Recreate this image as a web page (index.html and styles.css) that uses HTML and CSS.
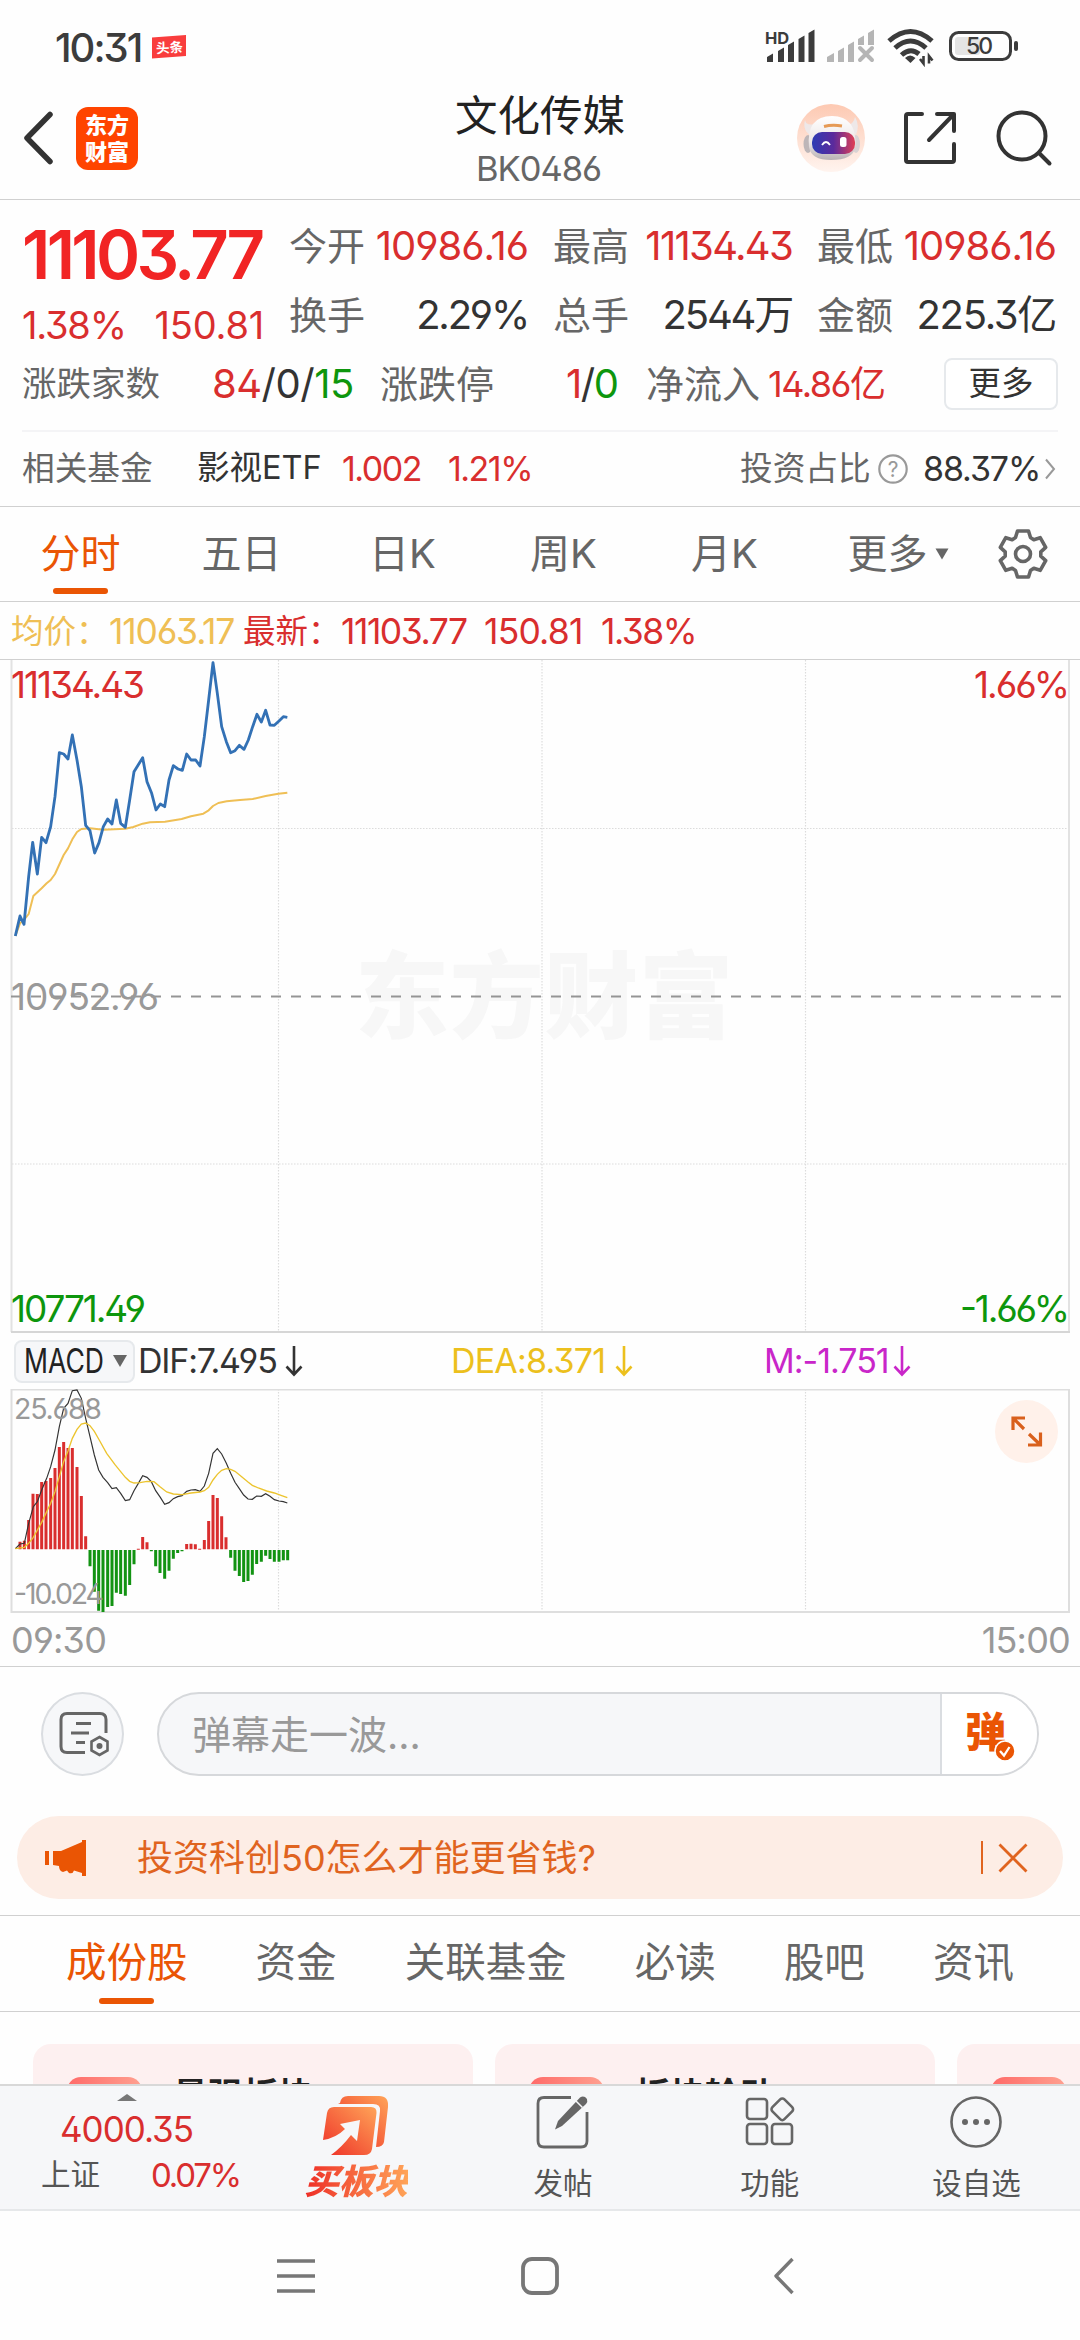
FILE: index.html
```html
<!DOCTYPE html>
<html lang="zh-CN">
<head>
<meta charset="utf-8">
<title>文化传媒 BK0486</title>
<link rel="stylesheet" href="styles.css">
</head>
<body>
<div class="phone">
  <div class="status">
    <span class="clock">10:31</span>
    <svg class="toutiao" width="34" height="34" viewBox="0 0 34 34"><path d="M0 7.500L34 5V26L0 28.500z" fill="#f93d3d"/><text x="4" y="22.500" font-size="13.500" font-weight="700" fill="#fff" transform="rotate(-3 17 17)">头条</text></svg>
    <svg class="signals" width="260" height="40" viewBox="0 0 260 40">
      <text class="hd" x="0" y="16.500">HD</text>
      <g fill="#3c3c3c">
        <path d="M2 30l6-3.500v8.500h-6zM13 24l6-3.500v14.500h-6zM23 18l6-3.500v20.500h-6zM33.500 12l6-3.500v26.500h-6zM43.500 6l6-3.500v32.500h-6z"/>
      </g>
      <g fill="#b5b5b5">
        <path d="M62 30l7-4v9h-7zM73 24l6-3.500v14.500h-6zM83 18l6-3.500v20.500h-6zM93 12l6-3.500v9.500h-6zM103 6l6-3.500v15.500h-6z"/>
      </g>
      <path d="M95 21l12 12M107 21l-12 12" stroke="#b5b5b5" stroke-width="4" stroke-linecap="round"/>
      <g fill="none" stroke="#3c3c3c" stroke-width="5">
        <path d="M124 14Q145.500-5 167 14"/><path d="M130 21Q145.500 7 161 21"/><path d="M136.500 28Q145.500 20 154 27"/>
      </g>
      <path d="M140 31Q145 26 150.500 31L145.500 36z" fill="#3c3c3c"/>
      <path d="M158.500 29v7.500l-3.500-4.500M164 36.500v-7.500l3.500 4.500" fill="none" stroke="#3c3c3c" stroke-width="2.600"/>
      <rect x="190" y="10" width="25" height="18" rx="3" fill="#e4e4e4"/>
      <rect x="185.500" y="5.500" width="60" height="27" rx="8" fill="none" stroke="#3c3c3c" stroke-width="3"/>
      <rect x="249" y="14" width="4" height="10" rx="2" fill="#3c3c3c"/>
      <text class="num" x="201" y="27" font-size="23" font-weight="500" fill="#3c3c3c" textLength="27">50</text>
    </svg>
  </div>

  <header class="header">
    <svg class="back" width="40" height="60" viewBox="0 0 40 60"><path d="M31 6.500L8 30L31 53.500" fill="none" stroke="#333" stroke-width="5.500" stroke-linecap="round" stroke-linejoin="round"/></svg>
    <div class="logo"><span>东方</span><span>财富</span></div>
    <div class="title"><h1>文化传媒</h1><p>BK0486</p></div>
    <svg class="robot" width="70" height="70" viewBox="0 0 70 70">
      <defs>
        <linearGradient id="halo" x1="0" y1="0" x2="0" y2="1"><stop offset="0" stop-color="#fdc9b2"/><stop offset="1" stop-color="#fff4ef"/></linearGradient>
        <linearGradient id="head" x1="0" y1="0" x2="0" y2="1"><stop offset="0" stop-color="#fff"/><stop offset=".6" stop-color="#ece6e6"/><stop offset="1" stop-color="#b9b2b4"/></linearGradient>
        <linearGradient id="visor"><stop offset="0" stop-color="#2c3bb4"/><stop offset=".5" stop-color="#5b2a9c"/><stop offset="1" stop-color="#e04055"/></linearGradient>
      </defs>
      <circle cx="35" cy="35" r="34" fill="url(#halo)"/>
      <ellipse cx="12" cy="41" rx="4.500" ry="9" fill="#bdb6b8"/><ellipse cx="60" cy="41" rx="4" ry="9" fill="#d9d3d4"/>
      <path d="M9 17q1 6 10 4l-3 12q-10-5-7-16zM59 14q5 8 1 18l-10-9q8-2 9-9z" fill="#eee8e8"/>
      <path d="M13 44Q10 13 36 13Q61 13 59.500 44Q57 57 35 57Q15 57 13 44z" fill="url(#head)"/>
      <path d="M28 23.500q8-2 18-.5" stroke="#e69a55" stroke-width="3" fill="none"/>
      <rect x="16" y="29" width="43" height="22" rx="10" fill="url(#visor)"/>
      <path d="M26 42q4-6 8 0" stroke="#fff" stroke-width="1.800" fill="none"/><rect x="44" y="34" width="6.500" height="10" rx="2.500" fill="#fff"/>
    </svg>
    <svg class="share" width="56" height="56" viewBox="0 0 56 56" fill="none" stroke="#333" stroke-width="4" stroke-linecap="round" stroke-linejoin="round"><path d="M20 4H6q-2 0-2 2V50q0 2 2 2H50q2 0 2-2V34M35 4H52V21M51 5L27 30"/></svg>
    <svg class="search" width="58" height="58" viewBox="0 0 58 58" fill="none" stroke="#333" stroke-width="4" stroke-linecap="round"><circle cx="26" cy="26" r="23.500"/><path d="M43 43L53.500 53.500"/></svg>
  </header>

  <section class="quote">
    <div class="quote-top">
      <div class="price">
        <div class="last">11103.77</div>
        <div class="change"><span>1.38%</span><span class="diff">150.81</span></div>
      </div>
      <div class="stats">
        <div class="stat"><label>今开</label><b class="red">10986.16</b></div>
        <div class="stat"><label>最高</label><b class="red high">11134.43</b></div>
        <div class="stat"><label>最低</label><b class="red">10986.16</b></div>
        <div class="stat"><label>换手</label><b>2.29%</b></div>
        <div class="stat"><label>总手</label><b>2544万</b></div>
        <div class="stat"><label>金额</label><b class="amount">225.3亿</b></div>
      </div>
    </div>
    <div class="breadth">
      <label class="b-label">涨跌家数</label>
      <span class="b-count"><i class="red">84</i>/0/<i class="green">15</i></span>
      <label class="b-limit">涨跌停</label>
      <span class="b-limit-val"><i class="red">1</i>/<i class="green">0</i></span>
      <label class="b-flow">净流入</label>
      <span class="b-flow-val red">14.86亿</span>
      <button class="more">更多</button>
    </div>
    <div class="fund">
      <label>相关基金</label>
      <span class="f-name">影视ETF</span>
      <span class="f-price red">1.002</span>
      <span class="f-pct red">1.21%</span>
      <label class="f-ratio">投资占比</label>
      <svg class="help" width="32" height="32" viewBox="0 0 32 32"><circle cx="16" cy="16" r="13.700" fill="none" stroke="#999" stroke-width="2.200"/><text class="num" x="16" y="23.500" text-anchor="middle" font-size="21" fill="#999">?</text></svg>
      <span class="f-val">88.37%</span>
      <svg class="chev" width="12" height="22" viewBox="0 0 12 22"><path d="M2 1.500L10 11L2 20.500" fill="none" stroke="#999" stroke-width="2"/></svg>
    </div>
  </section>

  <nav class="periods">
    <a class="on">分时</a><a>五日</a><a>日K</a><a>周K</a><a>月K</a>
    <a class="menu">更多<svg width="14" height="12" viewBox="0 0 14 12"><path d="M.5.5h13L7 11.500z" fill="#666"/></svg></a>
    <svg class="gear" width="52" height="52" viewBox="-26 -26 52 52" fill="none" stroke="#666" stroke-width="3.600" stroke-linejoin="round"><path d="M-5.500-23L5.500-23L7.500-16.500L10.800-14.300L17.200-16.300L22.700-6.700L17.800-2.200L17.800 2.200L22.700 6.700L17.200 16.300L10.800 14.300L7.500 16.500L5.500 23L-5.500 23L-7.500 16.500L-10.800 14.300L-17.200 16.300L-22.700 6.700L-17.800 2.200L-17.800-2.200L-22.700-6.700L-17.200-16.300L-10.800-14.300L-7.500-16.500z"/><circle r="7.500"/></svg>
  </nav>

  <div class="ticker">
    <span class="t-avg">均价：</span><span class="t-avg-val">11063.17</span><span class="t-new">最新：</span><span class="t-new-val">11103.77</span><span class="t-chg">150.81</span><span>1.38%</span>
  </div>

  <svg class="chart" width="1080" height="673" viewBox="0 660 1080 673">
    <text class="watermark" x="355" y="1031" textLength="378">东方财富</text>
    <g stroke="#dcdcdc" stroke-width="1.200" stroke-dasharray="1.500 1.500"><path d="M278.500 660V1332M542 660V1332M805.500 660V1332M12 828.500H1069M12 1164H1069"/></g>
    <path d="M11.500 660V1332M1069 660V1332" stroke="#e2e2e2" stroke-width="2"/>
    <path d="M11 1332H1070" stroke="#d6d6d6" stroke-width="2"/>
    <path d="M11 996.500H1069" stroke="#959595" stroke-width="2" stroke-dasharray="10 10"/>
    <g transform="translate(0 640) scale(.33333)" fill="none" stroke-linejoin="round">
      <polyline stroke="#efbf55" stroke-width="6" points="46,888 60,850 72,840 86,822 100,768 125,745 140,730 152,720 165,702 191,645 204,625 217,598 231,576 244,567 270,565 310,569 376,566 400,561 428,551 450,547 495,545 545,537 573,529 610,521 626,511 639,498 655,489 680,484 720,480 758,477 797,468 835,461 862,458"/>
      <polyline stroke="#3371b5" stroke-width="8.500" points="46,888 60,828 72,853 86,710 98,607 112,702 125,592 138,608 152,560 165,470 178,338 191,342 204,357 217,285 231,360 244,440 257,556 270,572 284,639 297,608 310,560 323,537 336,552 349,480 362,550 376,562 389,480 402,395 415,374 428,353 441,425 455,460 468,510 481,492 494,500 507,420 520,377 534,387 547,391 560,342 573,360 587,360 600,378 613,290 626,180 639,68 652,160 665,260 679,305 692,338 705,332 718,316 732,328 745,300 758,260 771,223 784,246 797,211 810,255 823,256 837,243 850,230 862,232"/>
    </g>
    <g class="num" font-size="37">
      <text x="11" y="698" fill="#d92e2e" textLength="134">11134.43</text>
      <text x="974" y="698" fill="#d92e2e" textLength="96">1.66%</text>
      <text x="11" y="1010" fill="#999" textLength="148">10952.96</text>
      <text x="11" y="1322" fill="#0d960d" textLength="135">10771.49</text>
      <text x="960" y="1322" fill="#0d960d" textLength="110">-1.66%</text>
    </g>
  </svg>

  <div class="macd-head">
    <button class="indicator"><svg width="80" height="30" viewBox="0 0 80 30"><text class="num" x="0" y="27" font-size="34" fill="#222" textLength="80" lengthAdjust="spacingAndGlyphs">MACD</text></svg><svg width="14" height="12" viewBox="0 0 14 12"><path d="M0 0h14L7 12z" fill="#666"/></svg></button>
    <span class="dif">DIF:7.495</span><svg class="down" width="18" height="32" viewBox="0 0 18 32"><path d="M9 1V29M1.500 21.500L9 29.500L16.500 21.500"/></svg>
    <span class="dea">DEA:8.371</span><svg class="down y" width="18" height="32" viewBox="0 0 18 32"><path d="M9 1V29M1.500 21.500L9 29.500L16.500 21.500"/></svg>
    <span class="mval">M:-1.751</span><svg class="down m" width="18" height="32" viewBox="0 0 18 32"><path d="M9 1V29M1.500 21.500L9 29.500L16.500 21.500"/></svg>
  </div>

  <svg class="macd" width="1080" height="225" viewBox="0 1389 1080 225">
    <g stroke="#dcdcdc" stroke-width="1.200" stroke-dasharray="1.500 1.500"><path d="M278.500 1389V1612M542 1389V1612M805.500 1389V1612"/></g>
    <path d="M11 1389.500H1069.500M11.500 1389V1612H1069V1389" fill="none" stroke="#dedede" stroke-width="2"/>
    <g transform="translate(0 1290) scale(.33333)" fill="none">
      <path stroke="#d92e2e" stroke-width="9" d="M60 778V755M73 778V752M86 778V690M99 778V611M112 778V612M125 778V576M138 778V573M152 778V564M165 778V534M178 778V471M191 778V456M204 778V474M217 778V474M231 778V531M244 778V618M257 778V739M415 779V776M428 778V741M441 778V757M560 778V762M573 778V761M586 778V763M599 779V776M613 778V750M626 778V693M639 778V615M652 778V624M665 778V679M678 778V742"/>
      <path stroke="#129312" stroke-width="9" d="M270 780V829M283 780V905M296 780V962M309 780V966M323 780V951M336 780V948M349 780V908M362 780V912M376 780V917M389 780V885M402 780V823M454 780V784M467 780V829M480 780V849M494 780V866M507 780V842M520 780V806M533 780V789M546 780V784M692 780V803M705 780V842M718 780V858M731 780V876M744 780V873M757 780V854M770 780V822M784 780V815M797 780V797M810 780V807M823 780V815M837 780V815M850 780V811M863 780V811"/>
      <polyline stroke="#333" stroke-width="3.500" points="46,776 60,762 73,760 86,700 100,650 112,635 125,600 140,565 152,530 165,480 178,410 191,355 204,340 217,302 231,300 244,325 257,385 270,440 283,495 296,540 309,562 323,578 336,596 349,593 362,610 376,632 389,629 402,602 415,580 428,557 441,562 454,575 467,602 481,622 494,643 507,638 520,626 533,620 546,617 560,604 573,600 586,599 600,604 613,588 626,550 639,490 652,476 665,492 679,520 692,550 705,577 718,596 731,615 744,627 757,628 770,618 784,619 797,611 810,619 823,629 837,633 850,635 862,639"/>
      <polyline stroke="#ecc42e" stroke-width="4" points="46,776 73,772 86,760 100,742 125,697 152,640 165,605 178,560 191,515 204,483 217,445 231,418 244,402 257,399 270,407 283,424 296,447 320,490 345,524 376,562 389,574 402,579 420,578 441,574 462,575 481,591 500,606 520,612 546,614 573,609 600,606 613,602 626,592 639,570 652,553 665,541 679,536 692,538 705,544 725,560 744,576 757,586 775,594 800,603 823,609 845,617 862,623"/>
    </g>
    <g class="num" font-size="28.500" fill="#999">
      <text x="14" y="1419" textLength="88">25.688</text>
      <text x="14" y="1604" textLength="90">-10.024</text>
    </g>
    <circle cx="1026.500" cy="1431.500" r="31.500" fill="#fff1ea"/>
    <path d="M1025 1418H1013V1430M1013.500 1418.500L1024 1429M1028 1445H1040.500V1432.500M1040 1444.500L1029 1434" fill="none" stroke="#d9601c" stroke-width="3.200"/>
  </svg>

  <div class="times"><span>09:30</span><span>15:00</span></div>

  <div class="danmaku">
    <div class="round"><svg width="52" height="46" viewBox="0 0 52 46" fill="none" stroke="#666" stroke-width="3"><path d="M28 41.500H10q-6 0-6-6V8.500q0-6 6-6H43q6 0 6 6V22M19 12.500H34M14 22H32M19 31.500H28"/><path stroke-width="2.600" d="M42.500 27.500L50.500 32V41L42.500 45.500L34.500 41V32z" transform="translate(0 -1.500)"/><circle cx="42.500" cy="35" r="3" fill="#666" stroke="none"/></svg></div>
    <div class="input"><span>弹幕走一波...</span>
      <div class="dan"><em>弹</em><svg width="22" height="22" viewBox="0 0 22 22"><circle cx="11" cy="11" r="10" fill="#ea5504" stroke="#fff" stroke-width="1.500"/><path d="M6 11l4 4.500L15.500 7" fill="none" stroke="#fff" stroke-width="2.300"/></svg></div>
    </div>
  </div>

  <div class="notice">
    <svg width="42" height="38" viewBox="0 0 42 38" fill="#ea5504"><path d="M0 12h4v14H0zM8 12H16L37 3V1h4V37h-4V34L29 31.500Q28 35 24 34L22 31.500L18 33Q14 32 14 27L8 26z"/></svg>
    <span>投资科创50怎么才能更省钱?</span>
    <i></i>
    <svg class="close" width="30" height="30" viewBox="0 0 30 30"><path d="M1.500 1.500L28.500 28.500M28.500 1.500L1.500 28.500" stroke="#e0641f" stroke-width="2.800"/></svg>
  </div>

  <nav class="sections">
    <a class="on">成份股</a><a>资金</a><a>关联基金</a><a>必读</a><a>股吧</a><a>资讯</a>
  </nav>

  <div class="cards">
    <div class="card"><i></i><b>最强板块</b></div>
    <div class="card"><i></i><b>板块轮动</b></div>
    <div class="card"><i></i></div>
  </div>

  <nav class="bottom">
    <div class="index">
      <svg width="20" height="7" viewBox="0 0 20 7"><path d="M0 7L10 0L20 7z" fill="#777"/></svg>
      <div class="i-val">4000.35</div>
      <div class="i-row"><span>上证</span><span class="red">0.07%</span></div>
    </div>
    <div class="item">
      <svg width="70" height="62" viewBox="0 0 70 62">
        <defs><linearGradient id="buy" x1="0" y1="1" x2="1" y2="0"><stop offset="0" stop-color="#ee2f27"/><stop offset="1" stop-color="#ffa458"/></linearGradient></defs>
        <path d="M19 8Q20 1 27 1H58Q68 1 67 12L63 47Q62 52 55 52L59 16Q60 9 52 9H17z" fill="url(#buy)"/>
        <path d="M13 12H50Q56 12 55.500 18L51 54Q50 60 43 60H10Q21 52 30 40L36 46L39 25L19 29L24 34Q15 43 2 45L6 18Q7 12 13 12z" fill="url(#buy)"/>
      </svg>
      <strong>买板块</strong>
    </div>
    <div class="item">
      <svg width="54" height="54" viewBox="0 0 54 54" fill="none" stroke="#666" stroke-width="2.800"><path d="M35 2.500H8q-6 0-6 6V46q0 6 6 6H45q6 0 6-6V17"/><path d="M19 34.500L22 26L44 2.500Q48 0 51 4Q52 7 50 9L26 31z" fill="#666" stroke="none"/><path d="M40 6l6.500 6.500" stroke="#f6f7f9" stroke-width="1.500"/></svg>
      <span>发帖</span>
    </div>
    <div class="item">
      <svg width="54" height="54" viewBox="0 0 54 54" fill="none" stroke="#666" stroke-width="2.600"><rect x="4" y="4" width="20" height="20" rx="3"/><rect x="4" y="29" width="20" height="20" rx="3"/><rect x="29" y="29" width="20" height="20" rx="3"/><rect x="30.800" y="5.800" width="17" height="17" rx="3" transform="rotate(45 39.300 14.300)"/></svg>
      <span>功能</span>
    </div>
    <div class="item">
      <svg width="54" height="54" viewBox="0 0 54 54"><circle cx="27" cy="27" r="24.500" fill="none" stroke="#666" stroke-width="2.600"/><g fill="#666"><circle cx="16" cy="27" r="3"/><circle cx="27" cy="27" r="3"/><circle cx="38" cy="27" r="3"/></g></svg>
      <span>设自选</span>
    </div>
  </nav>

  <div class="sysnav">
    <svg width="40" height="40" viewBox="0 0 40 40"><path d="M1 5H39M1 20H39M1 35H39" stroke="#777" stroke-width="3.500"/></svg>
    <svg width="40" height="40" viewBox="0 0 40 40"><rect x="3" y="3" width="34" height="34" rx="9" fill="none" stroke="#777" stroke-width="3.800"/></svg>
    <svg width="40" height="40" viewBox="0 0 40 40"><path d="M28.500 3L12 20L28.500 37" fill="none" stroke="#777" stroke-width="3.400" stroke-linejoin="round"/></svg>
  </div>
</div>
</body>
</html>
```
FILE: styles.css
```css
* { box-sizing: border-box; margin: 0; padding: 0; }
body { width: 1080px; height: 2340px; overflow: hidden; background: #fefefe; }
.phone {
  width: 1080px; height: 2340px; display: flex; flex-direction: column;
  font-family: Inter, "Noto Sans CJK SC", sans-serif;
  font-feature-settings: "cv09", "cv03", "cv04", "ss01";
  font-size: 38px; color: #333; line-height: 1; white-space: nowrap;
}
.phone > * { flex: none; }
svg { display: block; flex: none; }
i, em { font-style: normal; }
b, h1 { font-weight: 400; }
.num { font-family: Inter, sans-serif; }
.red { color: #d92e2e; }
.green { color: #0d960d; }
label { color: #666; }
button { font: inherit; color: #333; background: #fff; border: 2px solid #e6e9ec; }

.status { height: 96px; display: flex; align-items: flex-start; padding-left: 55px; }
.clock { width: 97px; margin-top: 26px; font-size: 40px; font-weight: 500; letter-spacing: -2px; color: #3c3c3c; line-height: 44px; }
.toutiao { margin-top: 30px; }
.signals { margin: 27px 0 0 579px; }
.hd { font: 700 16.500px Inter, sans-serif; fill: #3c3c3c; }

.header { height: 104px; border-bottom: 1px solid #d0d0d0; display: flex; align-items: flex-start; padding-left: 19px; }
.back { margin-top: 12px; }
.logo { width: 62px; height: 63px; margin: 11px 0 0 17px; border-radius: 12px; background: #ff4400; color: #fff; font-size: 22px; font-weight: 900; display: flex; flex-direction: column; align-items: center; justify-content: center; gap: 5px; }
.title { width: 404px; margin-left: 200px; text-align: center; }
.title h1 { font-size: 42.500px; color: #222; line-height: 42px; margin-top: -1px; }
.title p { font-size: 34.500px; color: #666; letter-spacing: -1px; line-height: 40px; margin: 12px 3px 0 0; }
.robot { margin: 7px 0 0 54px; }
.share { margin: 14px 0 0 36px; }
.search { margin: 14px 0 0 38px; }

.quote { height: 307px; border-bottom: 1px solid #d0d0d0; padding: 11px 22px 0; }
.quote-top { display: flex; gap: 25px; height: 138px; }
.price { width: 242px; color: #d92e2e; }
.last { font-size: 67px; font-weight: 600; color: #f12424; letter-spacing: -3.700px; line-height: 68px; margin-top: 10px; height: 69px; }
.change { display: flex; justify-content: space-between; letter-spacing: -1.200px; line-height: 70px; }
.diff { letter-spacing: -.2px; }
.stats { display: grid; grid-template-columns: repeat(3, 239px); column-gap: 25px; grid-auto-rows: 69px; }
.stat { display: flex; justify-content: space-between; align-items: center; }
.stat b { font-size: 40px; letter-spacing: -2.200px; }
.stat .red { letter-spacing: -1px; }
.stat .high { letter-spacing: -1.700px; }
.stat .amount { letter-spacing: -1.300px; }
.breadth { height: 70px; display: flex; align-items: center; }
.breadth span { font-size: 40px; letter-spacing: -1.500px; }
.b-label { font-size: 34.500px; width: 190px; }
.breadth .b-count { width: 168px; letter-spacing: -.5px; }
.b-limit { width: 186px; }
.b-limit-val { width: 80px; }
.b-flow { width: 122px; }
.breadth .b-flow-val { width: 176px; font-size: 36px; }
.more { width: 114px; height: 52px; border-radius: 8px; font-size: 32.500px; }
.fund { height: 75px; margin-top: 11px; border-top: 2px solid #f4f4f6; display: flex; align-items: center; font-size: 32.700px; }
.fund label:first-child { width: 175px; }
.fund span { font-size: 34px; letter-spacing: -1.500px; }
.fund .f-name { width: 145px; font-size: 32.500px; letter-spacing: 0; }
.f-price { width: 106px; }
.f-pct { width: 292px; }
.f-ratio { width: 137px; }
.help { margin-right: 14px; }
.fund .f-val { width: 121px; letter-spacing: -1.100px; }

.periods { height: 95px; border-bottom: 1px solid #d0d0d0; display: flex; align-items: stretch; font-size: 40px; color: #666; }
.periods a { width: 161px; display: flex; align-items: center; justify-content: center; position: relative; }
.periods .menu { width: 188px; gap: 7px; padding-right: 2px; }
.gear { margin: 21px 0 0 4px; }
.on { color: #ea5504; }
.on::after { content: ""; position: absolute; left: calc(50% - 27.500px); bottom: 7px; width: 55px; height: 6px; border-radius: 3px; background: #ea5504; }

.ticker { height: 58px; border-bottom: 1px solid #d0d0d0; display: flex; align-items: center; padding: 3px 0 0 11px; color: #d92e2e; font-size: 35.500px; letter-spacing: -1.500px; }
.ticker .t-avg, .ticker .t-new { font-size: 32.500px; letter-spacing: 0; width: 98px; }
.t-avg, .t-avg-val { color: #efbf55; }
.t-avg-val { width: 134px; letter-spacing: -1.200px; }
.t-new-val { width: 143px; }
.t-chg { width: 117px; letter-spacing: -.8px; }
.watermark { font: 900 94px "Noto Sans CJK SC", sans-serif; fill: #f7f7f7; }

.macd-head { height: 56px; display: flex; align-items: center; font-size: 34px; letter-spacing: -1.200px; padding-left: 14px; }
.indicator { width: 121px; height: 43px; border-radius: 8px; background: #f6f7f9; display: flex; align-items: center; gap: 9px; padding-left: 8px; }
.dif { width: 141px; margin-left: 3px; }
.down { margin-left: 6px; fill: none; stroke: #333; stroke-width: 2.600; }
.down.y { stroke: #ecc01d; }
.down.m { stroke: #c926c9; }
.dea { width: 158px; margin-left: 148px; color: #ecc01d; letter-spacing: -.8px; }
.mval { width: 123px; margin-left: 131px; color: #c926c9; letter-spacing: -1px; }

.times { height: 54px; margin-top: -1px; border-bottom: 1px solid #d0d0d0; display: flex; justify-content: space-between; align-items: center; padding: 1px 10px 0 11px; font-size: 36px; letter-spacing: -.8px; color: #999; }

.danmaku { height: 149px; padding: 25px 41px 0; display: flex; gap: 33px; }
.round { width: 83px; height: 84px; border-radius: 50%; border: 2px solid #dadde1; background: #f6f7f9; display: flex; align-items: center; justify-content: center; }
.input { width: 882px; height: 84px; border-radius: 42px; border: 2px solid #d6d8db; background: #f6f7f9; display: flex; align-items: center; justify-content: space-between; overflow: hidden; padding-left: 33px; color: #999; font-size: 39px; }
.dan { width: 97px; height: 100%; border-left: 2px solid #dadde1; background: #fff; display: flex; align-items: center; padding-left: 23px; position: relative; }
.dan em { color: #ea5504; font-weight: 900; font-size: 41px; margin-top: -3px; }
.dan svg { position: absolute; left: 52px; top: 46px; }

.notice { width: 1046px; height: 83px; margin: 0 17px; border-radius: 42px; background: #fdede5; display: flex; align-items: center; padding-left: 28px; color: #e0641f; font-size: 36px; }
.notice span { width: 844px; margin-left: 50px; }
.notice i { width: 2px; height: 33px; background: #e0641f; }
.notice .close { margin-left: 15px; }

.sections { height: 97px; margin-top: 16px; border-top: 1px solid #d0d0d0; border-bottom: 1px solid #d0d0d0; display: flex; align-items: stretch; justify-content: space-between; padding: 0 66px; font-size: 40.500px; color: #666; }
.sections a { display: flex; align-items: center; position: relative; }

.cards { height: 72px; padding: 32px 0 0 33px; display: flex; gap: 22px; overflow: hidden; }
.card { flex: none; width: 440px; height: 140px; border-radius: 18px; background: #fdf0f0; display: flex; align-items: flex-start; gap: 31px; padding: 33px 34px; }
.card i { width: 75px; height: 75px; border-radius: 14px; background: linear-gradient(90deg, #ff6a68, #ffa090); }
.card b { font-size: 35px; font-weight: 700; line-height: 36px; color: #222; }

.bottom { height: 127px; border-top: 2px solid #d8d8d8; border-bottom: 2px solid #e6e8ea; background: #f6f7f9; display: flex; color: #555; font-size: 29.500px; }
.index { width: 253px; display: flex; flex-direction: column; align-items: center; padding-top: 8px; }
.i-val { font-size: 35px; color: #d92e2e; letter-spacing: -1px; line-height: 40px; margin-top: 8px; }
.i-row { width: 199px; height: 48px; margin: 2px 0 0 28px; display: flex; justify-content: space-between; align-items: center; }
.i-row .red { font-size: 33px; letter-spacing: -2.200px; }
.item { width: 206.700px; display: flex; flex-direction: column; align-items: center; padding-top: 9px; }
.item span { margin-top: 19px; line-height: 30px; }
.item strong { margin-top: 7px; font-size: 34.500px; line-height: 36px; font-weight: 900; font-style: italic; background: linear-gradient(90deg, #ee2f27, #ffa458); -webkit-background-clip: text; background-clip: text; color: transparent; }

.sysnav { height: 130px; display: flex; justify-content: space-between; align-items: center; padding: 0 276px; }
```
